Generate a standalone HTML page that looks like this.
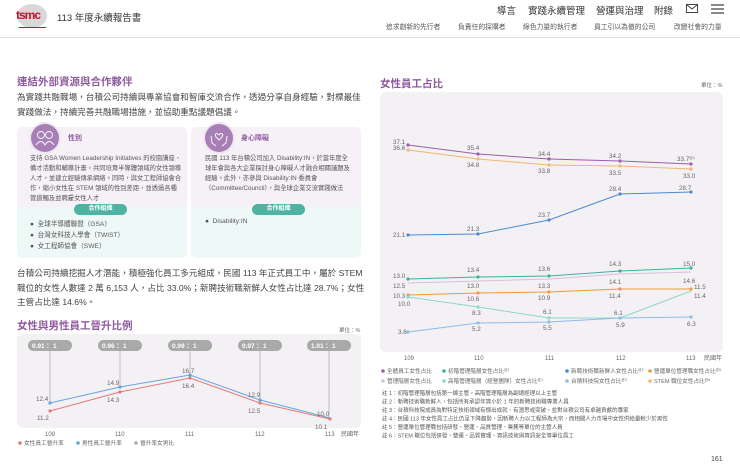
<!DOCTYPE html>
<html><head><meta charset="utf-8"><style>
*{margin:0;padding:0;box-sizing:border-box}
body{width:740px;height:465px;overflow:hidden;background:#fff;font-family:"Liberation Sans","Noto Sans CJK TC",sans-serif;color:#444;position:relative}
.a{position:absolute;white-space:nowrap}
.h{color:#8f5a9e;font-size:10.5px;font-weight:bold}
.p{font-size:8.6px;line-height:15px;color:#444;white-space:normal}
.card{position:absolute;top:127px;width:170px;height:131px;border-radius:5px;background:linear-gradient(#f6f1f7 0,#f6f1f7 80px,#eef9f7 80px)}
.ct{font-size:6.3px;line-height:10px;color:#555;white-space:normal}
.tag{position:absolute;width:53px;height:11px;border-radius:6px;background:#4fb3a3;color:#fff;font-size:6px;text-align:center;line-height:11px;font-weight:bold}
.li{font-size:6.6px;color:#555}
.ic{position:absolute;width:28px;height:28px;border-radius:50%;background:#a77eb6;box-shadow:0 0 0 2px #efe6f2}
svg text{font-family:"Liberation Sans","Noto Sans CJK TC",sans-serif}
</style></head><body>
<!-- header -->
<div class="a" style="left:17px;top:4px;width:30px;height:24px;border-radius:50%;background:#d8d8d8"></div>
<div class="a" style="left:16px;top:8px;font-size:12px;font-weight:bold;color:#c8102e;letter-spacing:-1px">tsmc</div>
<div class="a" style="left:19px;top:27px;width:27px;height:1px;background:#c8102e"></div>
<div class="a" style="left:57px;top:10px;font-size:9.5px;color:#333">113 年度永續報告書</div>
<div class="a" style="left:497px;top:3px;font-size:9.5px;color:#333">導言</div>
<div class="a" style="left:528px;top:3px;font-size:9.5px;color:#333">實踐永續管理</div>
<div class="a" style="left:596px;top:3px;font-size:9.5px;color:#333">營運與治理</div>
<div class="a" style="left:654px;top:3px;font-size:9.5px;color:#333">附錄</div>
<svg class="a" style="left:686px;top:4px" width="12" height="9"><rect x="0.5" y="0.5" width="11" height="8" fill="none" stroke="#444"/><path d="M0.5 0.5 L6 5 L11.5 0.5" fill="none" stroke="#444"/></svg>
<svg class="a" style="left:711px;top:4px" width="13" height="10"><path d="M0 1H13M0 5H13M0 9H13" stroke="#444" stroke-width="1.2"/></svg>
<div class="a" style="left:386px;top:21px;font-size:6.8px;color:#555">追求創新的先行者</div>
<div class="a" style="left:458px;top:21px;font-size:6.8px;color:#555">負責任的採購者</div>
<div class="a" style="left:523px;top:21px;font-size:6.8px;color:#555">綠色力量的執行者</div>
<div class="a" style="left:594px;top:21px;font-size:6.8px;color:#555">員工引以為傲的公司</div>
<div class="a" style="left:674px;top:21px;font-size:6.8px;color:#555">改變社會的力量</div>
<div class="a" style="left:0;top:37px;width:740px;height:1px;background:#ddd"></div>

<!-- left top -->
<div class="a h" style="left:17px;top:74px">連結外部資源與合作夥伴</div>
<div class="a p" style="left:17px;top:90px;width:345px">為實踐共融職場，台積公司持續與專業協會和智庫交流合作，透過分享自身經驗，對標最佳實踐做法，持續完善共融職場措施，並協助重點議題倡議。</div>
<div class="card" style="left:17px"></div>
<div class="card" style="left:191px"></div>
<div class="ic" style="left:31px;top:124px"></div>
<div class="ic" style="left:205px;top:124px"></div>
<svg class="a" style="left:31px;top:124px" width="28" height="28" fill="none" stroke="#fff" stroke-width="0.9"><circle cx="10" cy="11" r="3.5"/><circle cx="18" cy="11" r="3.5"/><path d="M5 21 Q10 14 14 21 Q18 14 23 21"/></svg>
<svg class="a" style="left:205px;top:124px" width="28" height="28" fill="none" stroke="#fff" stroke-width="0.9"><path d="M14 11 C12 8 9 10 11 13 L14 16 L17 13 C19 10 16 8 14 11Z"/><path d="M6 12 L7 19 L11 22 M22 12 L21 19 L17 22"/></svg>
<div class="a" style="left:68px;top:133px;font-size:7px;color:#8f5a9e;font-weight:bold">性別</div>
<div class="a" style="left:241px;top:133px;font-size:7px;color:#8f5a9e;font-weight:bold">身心障礙</div>
<div class="a ct" style="left:30px;top:154px;width:152px">支持 GSA Women Leadership Initiatives 的校園講座、備才活動和輔導計畫，共同培育半導體領域的女性領導人才，並建立經驗傳承網絡。同時，與女工程師協會合作，縮小女性在 STEM 領域的性別差距，並透過各種管道觸及並聘雇女性人才</div>
<div class="a ct" style="left:205px;top:154px;width:145px">民國 113 年台積公司加入 Disability:IN，於當年度全球年會與各大企業探討身心障礙人才融合相關議題及經驗。此外，亦參與 Disability:IN 委員會（Committee/Council），與全球企業交流實踐做法</div>
<div class="tag" style="left:74px;top:204px">合作組織</div>
<div class="tag" style="left:252px;top:204px">合作組織</div>
<div class="a li" style="left:30px;top:218px">●&nbsp; 全球半導體聯盟（GSA）</div>
<div class="a li" style="left:30px;top:229px">●&nbsp; 台灣女科技人學會（TWIST）</div>
<div class="a li" style="left:30px;top:240px">●&nbsp; 女工程師協會（SWE）</div>
<div class="a li" style="left:205px;top:218px">●&nbsp; Disability:IN</div>

<div class="a p" style="left:17px;top:266px;width:348px;line-height:14.5px">台積公司持續挖掘人才潛能，積極強化員工多元組成，民國 113 年正式員工中，屬於 STEM 職位的女性人數達 2 萬 6,153 人，占比 33.0%；新聘技術職新鮮人女性占比達 28.7%；女性主管占比達 14.6%。</div>
<div class="a h" style="left:17px;top:318px">女性與男性員工晉升比例</div>
<div class="a" style="left:339px;top:326px;font-size:5.5px;color:#666">單位：%</div>
<div class="a h" style="left:380px;top:76px">女性員工占比</div>
<div class="a" style="left:701px;top:81px;font-size:5.5px;color:#666">單位：%</div>

<svg class="a" style="left:0;top:0" width="740" height="465" font-size="6.3" fill="#666">
<rect x="17" y="334" width="344" height="94" rx="6" fill="#f4f1f5"/>
<g stroke="#999" stroke-width="0.6">
<line x1="50" y1="350" x2="50" y2="403"/><line x1="120" y1="350" x2="120" y2="387"/><line x1="190" y1="350" x2="190" y2="375"/><line x1="260" y1="350" x2="260" y2="400"/><line x1="329" y1="350" x2="329" y2="418"/></g>
<g fill="#a9a9a9"><rect x="28" y="340" width="44" height="11" rx="5.5"/><rect x="98" y="340" width="44" height="11" rx="5.5"/><rect x="168" y="340" width="44" height="11" rx="5.5"/><rect x="238" y="340" width="44" height="11" rx="5.5"/><rect x="307" y="340" width="44" height="11" rx="5.5"/></g>
<g fill="#fff" font-size="6.5" font-weight="bold"><text x="32" y="348">0.91：  1</text><text x="102" y="348">0.96：  1</text><text x="172" y="348">0.99：  1</text><text x="242" y="348">0.97：  1</text><text x="311" y="348">1.01：  1</text></g>
<polyline points="50,411 120,392 190,378 260,403 330,419" fill="none" stroke="#e07b7b" stroke-width="1"/>
<polyline points="50,403 120,387 190,375 260,400 330,418" fill="none" stroke="#6aa3dc" stroke-width="1"/>
<g fill="#e07b7b"><circle cx="50" cy="411" r="1.6"/><circle cx="120" cy="392" r="1.6"/><circle cx="190" cy="378" r="1.6"/><circle cx="260" cy="403" r="1.6"/><circle cx="330" cy="419" r="1.6"/></g>
<g fill="#6aa3dc"><circle cx="50" cy="403" r="1.6"/><circle cx="120" cy="387" r="1.6"/><circle cx="190" cy="375" r="1.6"/><circle cx="260" cy="400" r="1.6"/></g>
<text x="36" y="401">12.4</text><text x="37" y="420">11.2</text><text x="107" y="385">14.9</text><text x="107" y="402">14.3</text><text x="182" y="373">16.7</text><text x="182" y="388">16.4</text><text x="248" y="397">12.9</text><text x="248" y="413">12.5</text><text x="317" y="416">10.0</text><text x="315" y="429">10.1</text>
<g font-size="6"><text x="45" y="436">109</text><text x="115" y="436">110</text><text x="185" y="436">111</text><text x="255" y="436">112</text><text x="325" y="436">113</text><text x="341" y="436">民國年</text></g>
<g font-size="5.7"><circle cx="20" cy="443" r="1.8" fill="#e07b7b"/><text x="24" y="445">女性員工晉升率</text><circle cx="78" cy="443" r="1.8" fill="#6aa3dc"/><text x="82" y="445">男性員工晉升率</text><circle cx="136" cy="443" r="1.8" fill="#aaa"/><text x="140" y="445">晉升率女男比</text></g>

<rect x="380" y="92" width="343" height="260" rx="6" fill="#f4f1f5"/>
<g fill="none" stroke-width="1">
<polyline points="408,150 478,159 549,165 620,166 691,169" stroke="#f2b76e"/>
<polyline points="408,145 478,154 549,159 620,161 691,164" stroke="#9a5fa8"/>
<polyline points="408,235 478,234 549,220 620,194 691,192" stroke="#4a8ad0"/>
<polyline points="408,283 478,281 549,279 620,274 691,272" stroke="#d8bfdc"/>
<polyline points="408,279 478,277 549,276 620,271 691,268" stroke="#3bb29c"/>
<polyline points="408,297 478,307 549,318 620,318 691,291" stroke="#8fd7c6"/>
<polyline points="408,295 478,293 549,292 620,289 691,289" stroke="#ee9a3a"/>
<polyline points="408,332 478,323 549,322 620,318 691,317" stroke="#8dbde8"/>
</g>
<g fill="#f2b76e"><circle cx="408" cy="150" r="1.6"/><circle cx="478" cy="159" r="1.6"/><circle cx="549" cy="165" r="1.6"/><circle cx="620" cy="166" r="1.6"/><circle cx="691" cy="169" r="1.6"/></g>
<g fill="#9a5fa8"><circle cx="408" cy="145" r="1.6"/><circle cx="478" cy="154" r="1.6"/><circle cx="549" cy="159" r="1.6"/><circle cx="620" cy="161" r="1.6"/><circle cx="691" cy="164" r="1.6"/></g>
<g fill="#4a8ad0"><circle cx="408" cy="235" r="1.6"/><circle cx="478" cy="234" r="1.6"/><circle cx="549" cy="220" r="1.6"/><circle cx="620" cy="194" r="1.6"/><circle cx="691" cy="192" r="1.6"/></g>
<g fill="#3bb29c"><circle cx="408" cy="279" r="1.6"/><circle cx="478" cy="277" r="1.6"/><circle cx="549" cy="276" r="1.6"/><circle cx="620" cy="271" r="1.6"/><circle cx="691" cy="268" r="1.6"/></g>
<g fill="#ee9a3a"><circle cx="408" cy="295" r="1.6"/><circle cx="478" cy="293" r="1.6"/><circle cx="549" cy="292" r="1.6"/><circle cx="620" cy="289" r="1.6"/><circle cx="691" cy="289" r="1.6"/></g>
<g fill="#8fd7c6"><circle cx="408" cy="297" r="1.6"/><circle cx="478" cy="307" r="1.6"/><circle cx="549" cy="318" r="1.6"/><circle cx="620" cy="318" r="1.6"/></g>
<g fill="#8dbde8"><circle cx="408" cy="332" r="1.6"/><circle cx="478" cy="323" r="1.6"/><circle cx="549" cy="322" r="1.6"/><circle cx="620" cy="318" r="1.6"/><circle cx="691" cy="317" r="1.6"/></g>
<text x="393" y="144">37.1</text><text x="393" y="150">36.6</text><text x="467" y="150">35.4</text><text x="467" y="167">34.8</text><text x="538" y="156">34.4</text><text x="538" y="173">33.8</text><text x="609" y="158">34.2</text><text x="609" y="175">33.5</text><text x="677" y="161">33.7<tspan font-size="3.5" dy="-2">註4</tspan></text><text x="683" y="178">33.0</text>
<text x="393" y="237">21.1</text><text x="467" y="231">21.3</text><text x="538" y="217">23.7</text><text x="609" y="191">28.4</text><text x="679" y="190">28.7</text>
<text x="393" y="278">13.0</text><text x="467" y="272">13.4</text><text x="538" y="271">13.6</text><text x="609" y="266">14.3</text><text x="683" y="266">15.0</text>
<text x="393" y="288">12.5</text><text x="467" y="288">13.0</text><text x="538" y="288">13.3</text><text x="609" y="284">14.1</text><text x="683" y="283">14.6</text>
<text x="393" y="298">10.3</text><text x="467" y="301">10.6</text><text x="538" y="300">10.9</text><text x="609" y="298">11.4</text><text x="694" y="289">11.5</text>
<text x="398" y="306">10.0</text><text x="472" y="315">8.3</text><text x="543" y="314">6.1</text><text x="614" y="315">6.1</text><text x="694" y="298">11.4</text>
<text x="398" y="334">3.6</text><text x="472" y="331">5.2</text><text x="543" y="330">5.5</text><text x="616" y="327">5.9</text><text x="687" y="326">6.3</text>
<g font-size="6"><text x="404" y="360">109</text><text x="474" y="360">110</text><text x="545" y="360">111</text><text x="616" y="360">112</text><text x="686" y="360">113</text><text x="704" y="360">民國年</text></g>
<g font-size="5.6">
<circle cx="383" cy="371" r="1.8" fill="#9a5fa8"/><text x="387" y="373">全體員工女性占比</text>
<circle cx="444" cy="371" r="1.8" fill="#3bb29c"/><text x="448" y="373">初階管理階層女性占比<tspan font-size="3.5" dy="-2">註1</tspan></text>
<circle cx="567" cy="371" r="1.8" fill="#4a8ad0"/><text x="571" y="373">新聘技術職新鮮人女性占比<tspan font-size="3.5" dy="-2">註2</tspan></text>
<circle cx="650" cy="371" r="1.8" fill="#ee9a3a"/><text x="654" y="373">營運單位管理職女性占比<tspan font-size="3.5" dy="-2">註5</tspan></text>
<circle cx="383" cy="381" r="1.8" fill="#d8bfdc"/><text x="387" y="383">管理階層女性占比</text>
<circle cx="444" cy="381" r="1.8" fill="#8fd7c6"/><text x="448" y="383">高階管理階層（經營團隊）女性占比<tspan font-size="3.5" dy="-2">註1</tspan></text>
<circle cx="567" cy="381" r="1.8" fill="#8dbde8"/><text x="571" y="383">台積科技院女性占比<tspan font-size="3.5" dy="-2">註3</tspan></text>
<circle cx="650" cy="381" r="1.8" fill="#f2b76e"/><text x="654" y="383">STEM 職位女性占比<tspan font-size="3.5" dy="-2">註6</tspan></text>
</g>
<g font-size="5.5" fill="#555">
<text x="382" y="395">註 1：初階管理階層包括第一線主管，高階管理階層為副總經理以上主管</text>
<text x="382" y="403.5">註 2：新聘技術職新鮮人，包括所有承認年資小於 1 年的新聘技術職專業人員</text>
<text x="382" y="412">註 3：台積科技院成員為對特定技術領域有傑出成就、有潛思或突破，並對台積公司有卓越貢獻的專家</text>
<text x="382" y="420.5">註 4：民國 113 年女性員工占比仍呈下降趨勢，因新聘人力以工程師為大宗，而相關人力市場中女性供給量較少於男性</text>
<text x="382" y="429">註 5：營運單位管理職包括研發、營運、品質管理、業務等單位的主管人員</text>
<text x="382" y="437.5">註 6：STEM 職位包括研發、營運、品質管理、資訊技術與資訊安全等單位員工</text>
</g>
<text x="711" y="461" font-size="7" fill="#444">161</text>
</svg>
</body></html>
